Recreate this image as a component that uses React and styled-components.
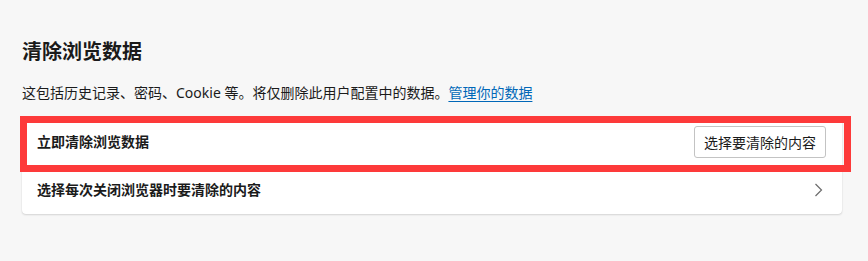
import React from "react";
import styled, { createGlobalStyle } from "styled-components";

const GlobalStyle = createGlobalStyle`
  html, body {
    margin: 0;
    padding: 0;
    background: #f7f7f7;
  }
  body {
    font-family: "Noto Sans", "Noto Sans CJK SC", sans-serif;
    color: #1b1b1b;
  }
`;

const Page = styled.div`
  display: flex;
  flex-direction: column;
  padding: 38px 26px 0 22px;
  min-height: 261px;
  box-sizing: border-box;
`;

const Title = styled.h2`
  margin: 0;
  font-size: 20px;
  line-height: 28px;
  font-weight: 700;
  color: #1a1a1a;
`;

const Description = styled.p`
  margin: 17px 0 0;
  font-size: 14px;
  line-height: 20px;
  color: #1b1b1b;
`;

const Link = styled.a`
  color: #0067b8;
  text-decoration: underline;
  text-underline-offset: 3px;
  cursor: pointer;
`;

const Card = styled.div`
  position: relative;
  margin-top: 15px;
  background: #ffffff;
  border-radius: 4px;
  box-shadow: 0 1px 2px rgba(0, 0, 0, 0.14), 0 0 1px rgba(0, 0, 0, 0.1);
`;

const Row = styled.div`
  display: flex;
  align-items: center;
  justify-content: space-between;
  height: ${(p) => p.$height}px;
  padding: 0 ${(p) => p.$padRight}px 0 15px;
  border-top: ${(p) => (p.$divider ? "1px solid #ebebeb" : "none")};
  cursor: pointer;
`;

const RowLabel = styled.span`
  font-size: 14px;
  line-height: 20px;
  font-weight: 600;
  color: #1b1b1b;
`;

const Button = styled.button`
  width: 132px;
  height: 32px;
  padding: 0 9px;
  border: 1px solid #c3c3c3;
  border-radius: 3px;
  background: #ffffff;
  font-family: inherit;
  font-size: 14px;
  color: #1b1b1b;
  cursor: pointer;
`;

const Highlight = styled.div`
  position: absolute;
  left: -2px;
  top: -2px;
  width: 831px;
  height: 56px;
  box-sizing: border-box;
  border: 7px solid #fd3a3a;
  pointer-events: none;
`;

const Chevron = () => (
  <svg width="9" height="14" viewBox="0 0 9 14" fill="none">
    <polyline
      points="1.5,1 7.5,7 1.5,13"
      stroke="#6b6b6b"
      strokeWidth="1.2"
      strokeLinejoin="miter"
    />
  </svg>
);

export default function App() {
  return (
    <>
      <GlobalStyle />
      <Page>
        <Title>清除浏览数据</Title>
        <Description>
          这包括历史记录、密码、Cookie 等。将仅删除此用户配置中的数据。
          <Link>管理你的数据</Link>
        </Description>
        <Card>
          <Row $height={47} $padRight={16}>
            <RowLabel>立即清除浏览数据</RowLabel>
            <Button>选择要清除的内容</Button>
          </Row>
          <Row $height={48} $padRight={19} $divider>
            <RowLabel>选择每次关闭浏览器时要清除的内容</RowLabel>
            <Chevron />
          </Row>
          <Highlight />
        </Card>
      </Page>
    </>
  );
}
